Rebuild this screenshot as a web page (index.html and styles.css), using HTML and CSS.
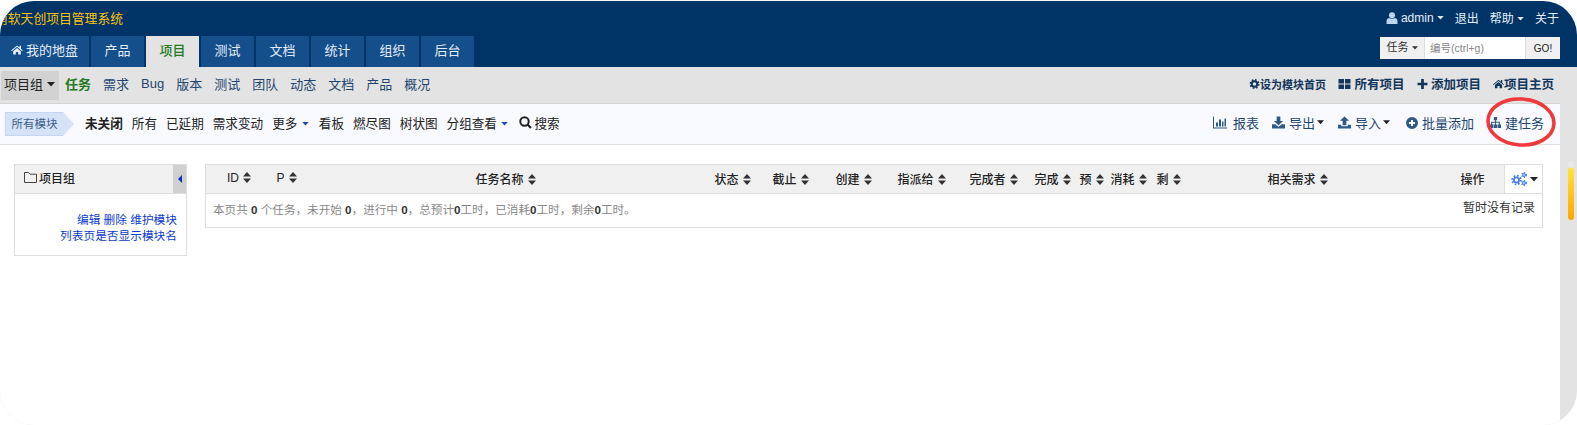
FILE: index.html
```html
<!DOCTYPE html>
<html lang="zh-CN">
<head>
  <meta charset="UTF-8">
  <title>项目管理系统</title>
  <link rel="stylesheet" href="styles.css">
</head>
<body>
  <svg class="icon-defs" aria-hidden="true">
    <symbol id="i-sort" viewBox="0 0 8 11"><path d="M0 4.6 L4 0 L8 4.6 Z M0 6.4 H8 L4 11 Z"/></symbol>
    <symbol id="i-caret" viewBox="0 0 8 5"><path d="M0 0 H8 L4 4.5 Z"/></symbol>
    <symbol id="i-home" viewBox="0 0 14 12"><path d="M7 0.5 L10 3 V1 H11.8 V4.6 L14 6.5 L13.2 7.4 L7 2.2 L0.8 7.4 L0 6.5 Z M2.4 7.4 L7 3.6 L11.6 7.4 V11.5 H8.4 V8.4 H5.6 V11.5 H2.4 Z"/></symbol>
    <symbol id="i-cog" viewBox="0 0 12 12"><circle cx="6" cy="6" r="3.3" fill="none" stroke="currentColor" stroke-width="2.4"/><circle cx="6" cy="6" r="5" fill="none" stroke="currentColor" stroke-width="2" stroke-dasharray="2 1.93"/></symbol>
    <symbol id="i-download" viewBox="0 0 14 13"><path d="M5 0 H9 V5 H12 L7 9.5 L2 5 H5 Z M0 8.5 H3.5 L7 11 L10.5 8.5 H14 V13 H0 Z"/></symbol>
    <symbol id="i-upload" viewBox="0 0 14 13"><path d="M7 0 L12 4.5 H9 V9.5 H5 V4.5 H2 Z M0 9 H3.5 V10.5 H10.5 V9 H14 V13 H0 Z"/></symbol>
  </svg>

  <div class="app">
    <header class="main-header">
      <div class="top-row">
        <span class="brand">南软天创项目管理系统</span>
        <nav class="user-menu">
          <a class="user-link">
            <svg class="icon-user" viewBox="0 0 12 12"><circle cx="6" cy="3.2" r="3"/><path d="M0.5 12 V9 Q0.5 6.4 3 6 Q6 7.6 9 6 Q11.5 6.4 11.5 9 V12 Z"/></svg>
            admin
            <svg class="caret"><use href="#i-caret"/></svg>
          </a>
          <a>退出</a>
          <a>帮助 <svg class="caret"><use href="#i-caret"/></svg></a>
          <a>关于</a>
        </nav>
      </div>
      <div class="nav-row">
        <nav class="main-tabs">
          <a class="tab tab-home"><svg class="icon-home"><use href="#i-home"/></svg>我的地盘</a>
          <a class="tab">产品</a>
          <a class="tab active">项目</a>
          <a class="tab">测试</a>
          <a class="tab">文档</a>
          <a class="tab">统计</a>
          <a class="tab">组织</a>
          <a class="tab">后台</a>
        </nav>
        <form class="quick-search">
          <span class="search-type">任务 <svg class="caret"><use href="#i-caret"/></svg></span>
          <input type="text" class="search-input" placeholder="编号(ctrl+g)">
          <button type="button" class="search-go">GO!</button>
        </form>
      </div>
    </header>

    <div class="sub-nav">
      <div class="sub-left">
        <a class="group-btn">项目组 <svg class="caret"><use href="#i-caret"/></svg></a>
        <a class="sub-link current">任务</a>
        <a class="sub-link">需求</a>
        <a class="sub-link">Bug</a>
        <a class="sub-link">版本</a>
        <a class="sub-link">测试</a>
        <a class="sub-link">团队</a>
        <a class="sub-link">动态</a>
        <a class="sub-link">文档</a>
        <a class="sub-link">产品</a>
        <a class="sub-link">概况</a>
      </div>
      <div class="sub-right">
        <a class="set-home"><svg class="icon-sm"><use href="#i-cog"/></svg>设为模块首页</a>
        <a><svg class="icon-sm icon-grid" viewBox="0 0 12 10"><path d="M0 0 H5.5 V4.4 H0 Z M6.5 0 H12 V4.4 H6.5 Z M0 5.6 H5.5 V10 H0 Z M6.5 5.6 H12 V10 H6.5 Z"/></svg> 所有项目</a>
        <a><svg class="icon-sm" viewBox="0 0 11 11"><path d="M4 0 H7 V4 H11 V7 H7 V11 H4 V7 H0 V4 H4 Z"/></svg> 添加项目</a>
        <a><svg class="icon-sm"><use href="#i-home"/></svg>项目主页</a>
      </div>
    </div>

    <div class="content-wrap">
      <div class="toolbar">
        <div class="toolbar-left">
          <span class="module-tag">所有模块</span>
          <a class="filter strong">未关闭</a>
          <a class="filter">所有</a>
          <a class="filter">已延期</a>
          <a class="filter">需求变动</a>
          <a class="filter">更多 <svg class="caret blue"><use href="#i-caret"/></svg></a>
          <a class="filter">看板</a>
          <a class="filter">燃尽图</a>
          <a class="filter">树状图</a>
          <a class="filter">分组查看 <svg class="caret blue"><use href="#i-caret"/></svg></a>
          <a class="filter search-toggle">
            <svg class="icon-search" viewBox="0 0 13 13"><circle cx="5.5" cy="5.5" r="4.2" fill="none" stroke="currentColor" stroke-width="2"/><path d="M8.5 8.5 L12 12" stroke="currentColor" stroke-width="2.2"/></svg>
            搜索
          </a>
        </div>
        <div class="toolbar-right">
          <a class="action action-report">
            <svg class="icon-action" viewBox="0 0 14 12"><path d="M0 0 H1 V11 H14 V12 H0 Z M3 6 H5 V10 H3 Z M6 3 H8 V10 H6 Z M9 5 H10.5 V10 H9 Z M11.5 2 H13 V10 H11.5 Z"/></svg>
            报表
          </a>
          <a class="action action-export"><svg class="icon-action"><use href="#i-download"/></svg>导出<svg class="caret dark"><use href="#i-caret"/></svg></a>
          <a class="action action-import"><svg class="icon-action"><use href="#i-upload"/></svg>导入<svg class="caret dark"><use href="#i-caret"/></svg></a>
          <a class="action action-batch">
            <svg class="icon-action icon-round" viewBox="0 0 12 12"><path fill-rule="evenodd" d="M6 0 A6 6 0 1 0 6 12 A6 6 0 1 0 6 0 Z M5 3 H7 V5 H9 V7 H7 V9 H5 V7 H3 V5 H5 Z"/></svg>
            批量添加
          </a>
          <a class="action action-create">
            <svg class="icon-action icon-tree" viewBox="0 0 12 12"><path d="M4.2 0 H7.8 V3.6 H6.5 V5.2 H10.8 V8.2 H12 V12 H8.4 V8.2 H9.6 V6.4 H6.5 V8.2 H7.8 V12 H4.2 V8.2 H5.5 V6.4 H2.4 V8.2 H3.6 V12 H0 V8.2 H1.2 V5.2 H5.5 V3.6 H4.2 Z"/></svg>
            建任务
          </a>
        </div>
      </div>

      <main class="main-area">
        <aside class="side-panel">
          <div class="side-head">
            <span class="side-title">
              <svg class="icon-folder" viewBox="0 0 13 11"><path d="M0.5 10.5 V0.5 H4.5 L6 2.2 H12.5 V10.5 Z" fill="none" stroke="currentColor"/></svg>
              项目组
            </span>
            <span class="side-toggle"></span>
          </div>
          <div class="side-body">
            <div><a>编辑</a> <a>删除</a> <a>维护模块</a></div>
            <div><a>列表页是否显示模块名</a></div>
          </div>
        </aside>

        <table class="task-table">
          <colgroup>
            <col class="c-id"><col class="c-p"><col class="c-name"><col class="c-status"><col class="c-dead">
            <col class="c-open"><col class="c-assign"><col class="c-finisher"><col class="c-done"><col class="c-est">
            <col class="c-used"><col class="c-left"><col class="c-story"><col class="c-ops"><col class="c-gear">
          </colgroup>
          <thead>
            <tr>
              <th class="th-id">ID <svg class="sort"><use href="#i-sort"/></svg></th>
              <th>P <svg class="sort"><use href="#i-sort"/></svg></th>
              <th>任务名称 <svg class="sort"><use href="#i-sort"/></svg></th>
              <th>状态 <svg class="sort"><use href="#i-sort"/></svg></th>
              <th>截止 <svg class="sort"><use href="#i-sort"/></svg></th>
              <th>创建 <svg class="sort"><use href="#i-sort"/></svg></th>
              <th>指派给 <svg class="sort"><use href="#i-sort"/></svg></th>
              <th>完成者 <svg class="sort"><use href="#i-sort"/></svg></th>
              <th>完成 <svg class="sort"><use href="#i-sort"/></svg></th>
              <th>预 <svg class="sort"><use href="#i-sort"/></svg></th>
              <th>消耗 <svg class="sort"><use href="#i-sort"/></svg></th>
              <th>剩 <svg class="sort"><use href="#i-sort"/></svg></th>
              <th>相关需求 <svg class="sort"><use href="#i-sort"/></svg></th>
              <th>操作</th>
              <th class="th-gear">
                <svg class="icon-gears" viewBox="0 0 16 14"><g fill="none" stroke="currentColor"><circle cx="5.5" cy="8" r="2.6" stroke-width="1.8"/><circle cx="5.5" cy="8" r="4.4" stroke-width="1.8" stroke-dasharray="1.7 1.75"/><circle cx="13" cy="3" r="1.4" stroke-width="1.2"/><circle cx="13" cy="3" r="2.4" stroke-width="1.2" stroke-dasharray="1.2 1.3"/><circle cx="13" cy="11" r="1.4" stroke-width="1.2"/><circle cx="13" cy="11" r="2.4" stroke-width="1.2" stroke-dasharray="1.2 1.3"/></g></svg>
                <svg class="caret dark"><use href="#i-caret"/></svg>
              </th>
            </tr>
          </thead>
          <tbody>
            <tr>
              <td colspan="13" class="summary">本页共 <b>0</b> 个任务，未开始 <b>0</b>，进行中 <b>0</b>，总预计<b>0</b>工时，已消耗<b>0</b>工时，剩余<b>0</b>工时。</td>
              <td colspan="2" class="no-record">暂时没有记录</td>
            </tr>
          </tbody>
        </table>
      </main>
    </div>

    <!-- red circle drawn over the create button -->
    <svg class="red-mark" viewBox="0 0 70 50"><ellipse cx="35" cy="25" rx="33" ry="23" fill="none" stroke="#f0393b" stroke-width="3.6"/></svg>
    <div class="scroll-thumb"></div>
  </div>
</body>
</html>
```

FILE: styles.css
```css
/* ===== Base ===== */
* {
  margin: 0;
  padding: 0;
  box-sizing: border-box;
}

body {
  background: #fff;
  font-family: "Liberation Sans", "Noto Sans CJK SC", sans-serif;
  font-size: 13px;
  color: #222;
}

a {
  text-decoration: none;
  color: inherit;
}

.icon-defs {
  display: none;
}

svg {
  fill: currentColor;
}

.app {
  position: relative;
  width: 1577px;
  height: 424px;
  margin-top: 1px;
  border-radius: 34px;
  overflow: hidden;
  background: #e3e3e3;
}

.caret {
  width: 8px;
  height: 5px;
  vertical-align: 2px;
}

.caret.blue {
  width: 7px;
  height: 4px;
  margin: 0 1px;
  color: #1a49b8;
}

.caret.dark {
  color: #222;
}

/* ===== Header ===== */
.main-header {
  background: #003366;
  height: 66px;
  color: #fff;
}

.top-row {
  height: 35px;
  display: flex;
  justify-content: space-between;
  align-items: center;
  padding-bottom: 2px;
}

.brand {
  margin: 0 0 1px -5px;
  color: #ffc20e;
  font-size: 12.8px;
}

.user-menu {
  display: flex;
  align-items: center;
  gap: 11px;
  padding-right: 18px;
  font-size: 12px;
  color: #e6eff8;
}

.user-link {
  display: flex;
  align-items: center;
  gap: 3px;
}

.user-menu .caret {
  width: 7px;
  height: 4px;
}

.icon-user {
  width: 12px;
  height: 12px;
  color: #bcd6f2;
}

.nav-row {
  height: 31px;
  display: flex;
  justify-content: space-between;
}

.main-tabs {
  display: flex;
  gap: 2px;
}

.tab {
  width: 53px;
  background: #144f8c;
  color: #e4edf6;
  text-align: center;
  line-height: 29px;
  font-size: 13px;
}

.tab-home {
  width: 89px;
}

.tab.active {
  background: #e3e3e3;
  color: #227a22;
  font-weight: 500;
}

.icon-home {
  width: 12px;
  height: 10px;
  margin-right: 3px;
}

.quick-search {
  display: flex;
  height: 22px;
  margin: 1px 17px 0 0;
  font-size: 11px;
  color: #333;
}

.search-type {
  width: 45px;
  background: #f0f0f0;
  text-align: center;
  line-height: 21px;
  border-right: 1px solid #ddd;
}

.search-type .caret {
  width: 6px;
  height: 4px;
  vertical-align: 1px;
}

.search-input {
  width: 100px;
  border: none;
  padding-left: 5px;
  font-family: inherit;
  font-size: 10.5px;
  background: #fff;
}

.search-input::placeholder {
  color: #888;
}

.search-go {
  width: 35px;
  border: none;
  border-left: 1px solid #ddd;
  background: #f0f0f0;
  font-family: inherit;
  font-size: 10px;
  color: #222;
}

/* ===== Sub navigation ===== */
.sub-nav {
  height: 36px;
  display: flex;
  justify-content: space-between;
  align-items: center;
  padding-left: 1px;
}

.sub-left {
  display: flex;
  align-items: center;
  gap: 12px;
  color: #1f4670;
}

.sub-link {
  padding-bottom: 3px;
}

.group-btn {
  width: 58px;
  height: 29px;
  margin: 0 -6px 0 0;
  background: #d2d2d2;
  color: #222;
  line-height: 27px;
  padding-left: 3px;
  white-space: nowrap;
}

.sub-link.current {
  color: #227a22;
  font-weight: bold;
}

.sub-right {
  display: flex;
  align-items: center;
  gap: 12px;
  padding: 0 23px 3px 0;
  font-size: 12.5px;
  font-weight: bold;
  color: #12365c;
}

.set-home {
  font-size: 11px;
}

.icon-sm {
  width: 11px;
  height: 10px;
}

.icon-grid {
  width: 13px;
}

/* ===== Toolbar ===== */
.content-wrap {
  margin-right: 17px;
  background: #fff;
  height: 322px;
}

.toolbar {
  height: 42px;
  background: #f8faff;
  border-top: 1px solid #d4d4d4;
  border-bottom: 1px solid #ddd;
  display: flex;
  justify-content: space-between;
  align-items: center;
  padding: 0 0 3px 5px;
}

.toolbar-left {
  display: flex;
  align-items: center;
  gap: 9px;
  font-size: 12.6px;
}

.module-tag {
  position: relative;
  width: 58px;
  height: 24px;
  margin-right: 13px;
  top: 1px;
  background: #d5e2f7;
  border: 1px solid #c6d6f1;
  border-right: none;
  color: #3b5f8a;
  font-size: 11.5px;
  line-height: 22px;
  text-align: center;
}

.module-tag::after {
  content: "";
  position: absolute;
  left: 57px;
  top: -1px;
  border-left: 11px solid #d5e2f7;
  border-top: 12px solid transparent;
  border-bottom: 12px solid transparent;
}

.filter.strong {
  font-weight: bold;
}

.search-toggle {
  display: flex;
  align-items: center;
  gap: 2px;
  margin-left: 1px;
}

.icon-search {
  width: 13px;
  height: 13px;
  color: #222;
}

.toolbar-right {
  display: flex;
  align-items: center;
  padding-right: 16px;
  color: #1f4670;
}

.action {
  display: flex;
  align-items: center;
  margin-left: 13px;
}

.action .caret {
  width: 7px;
  height: 5px;
  margin-left: 2px;
}

.icon-action {
  width: 13px;
  height: 13px;
  margin-right: 4px;
  color: #2f5a87;
}

.action-report .icon-action {
  width: 14px;
  margin-right: 6px;
}

.action-import {
  margin-left: 14px;
}

.action-batch {
  margin-left: 16px;
}

.action-create {
  margin-left: 16px;
}

.icon-tree {
  width: 11px;
  height: 11px;
}

.icon-round {
  width: 12px;
  height: 12px;
}

/* ===== Main ===== */
.main-area {
  display: flex;
  align-items: flex-start;
  gap: 18px;
  padding: 19px 18px 0 14px;
}

.side-panel {
  width: 173px;
  height: 92px;
  border: 1px solid #ddd;
  flex-shrink: 0;
}

.side-head {
  height: 29px;
  background: #f1f1f1;
  border-bottom: 1px solid #ddd;
  display: flex;
  justify-content: space-between;
}

.side-title {
  display: flex;
  align-items: center;
  gap: 2px;
  padding: 0 0 3px 9px;
  font-size: 12px;
  font-weight: 500;
}

.icon-folder {
  width: 13px;
  height: 11px;
  color: #444;
}

.side-toggle {
  position: relative;
  width: 13px;
  background: #d0d0d0;
}

.side-toggle::after {
  content: "";
  position: absolute;
  left: 5px;
  top: 10px;
  border-right: 4px solid #1230c8;
  border-top: 4px solid transparent;
  border-bottom: 4px solid transparent;
}

.side-body {
  padding: 18px 9px 0 0;
  text-align: right;
  font-size: 11.7px;
  line-height: 16px;
  color: #0b3bd0;
}

/* ===== Task table ===== */
.task-table {
  width: 1337px;
  table-layout: fixed;
  border-collapse: collapse;
  border: 1px solid #ddd;
  font-size: 12px;
}

.c-id { width: 63px; }
.c-p { width: 199px; }
.c-name { width: 239px; }
.c-status { width: 58px; }
.c-dead { width: 63px; }
.c-open { width: 62px; }
.c-assign { width: 72px; }
.c-finisher { width: 65px; }
.c-done { width: 45px; }
.c-est { width: 31px; }
.c-used { width: 46px; }
.c-left { width: 111px; }
.c-story { width: 193px; }
.c-ops { width: 52px; }
.c-gear { width: 38px; }

.task-table th {
  height: 29px;
  padding: 0 0 2px 8px;
  background: #f0f0f0;
  border-bottom: 1px solid #ddd;
  text-align: left;
  font-weight: 500;
  white-space: nowrap;
  color: #222;
}

.task-table th.th-id {
  padding-left: 21px;
}

.task-table th.th-gear {
  background: #fff;
  border-left: 1px solid #ddd;
  padding: 0 0 0 6px;
}

.sort {
  width: 8px;
  height: 11px;
  margin-left: 1px;
  vertical-align: -1px;
  color: #333;
}

.icon-gears {
  width: 16px;
  height: 14px;
  vertical-align: -2px;
  color: #4a7fe8;
}

.summary {
  height: 34px;
  padding: 0 0 3px 7px;
  font-size: 11.6px;
  color: #888;
}

.summary b {
  color: #333;
  font-weight: bold;
}

.no-record {
  padding: 0 7px 8px 0;
  text-align: right;
  color: #333;
}

/* ===== Overlays ===== */
.red-mark {
  position: absolute;
  left: 1486px;
  top: 96px;
  width: 70px;
  height: 50px;
  transform: rotate(4deg);
}

.scroll-thumb {
  position: absolute;
  left: 1568px;
  top: 160px;
  width: 6px;
  height: 59px;
  border-radius: 3px;
  background: linear-gradient(#e8e8e8 0, #e8e8e8 6px, #ffe23a 8px, #ffa500 100%);
}
```
